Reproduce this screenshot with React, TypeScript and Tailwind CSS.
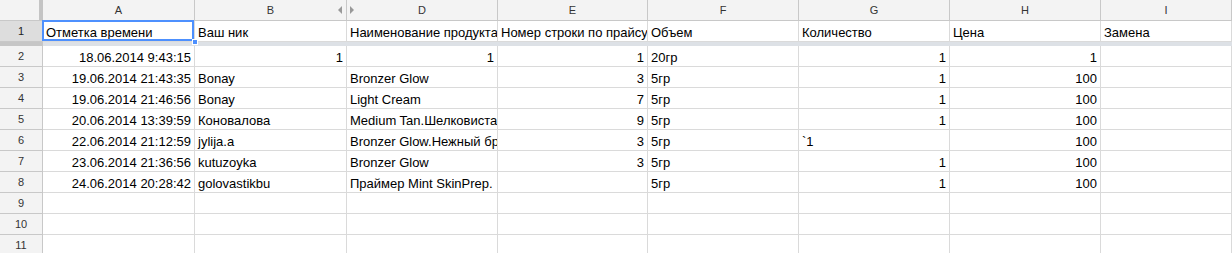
import React from "react";

type Cell = { v: string; r?: boolean };

const cols = ["A", "B", "D", "E", "F", "G", "H", "I"];

const head: string[] = [
  "Отметка времени",
  "Ваш ник",
  "Наименование продукта",
  "Номер строки по прайсу",
  "Объем",
  "Количество",
  "Цена",
  "Замена",
];

const rows: Cell[][] = [
  [{ v: "18.06.2014 9:43:15", r: true }, { v: "1", r: true }, { v: "1", r: true }, { v: "1", r: true }, { v: "20гр" }, { v: "1", r: true }, { v: "1", r: true }, { v: "" }],
  [{ v: "19.06.2014 21:43:35", r: true }, { v: "Bonay" }, { v: "Bronzer Glow" }, { v: "3", r: true }, { v: "5гр" }, { v: "1", r: true }, { v: "100", r: true }, { v: "" }],
  [{ v: "19.06.2014 21:46:56", r: true }, { v: "Bonay" }, { v: "Light Cream" }, { v: "7", r: true }, { v: "5гр" }, { v: "1", r: true }, { v: "100", r: true }, { v: "" }],
  [{ v: "20.06.2014 13:39:59", r: true }, { v: "Коновалова" }, { v: "Medium Tan.Шелковистая пудра" }, { v: "9", r: true }, { v: "5гр" }, { v: "1", r: true }, { v: "100", r: true }, { v: "" }],
  [{ v: "22.06.2014 21:12:59", r: true }, { v: "jylija.a" }, { v: "Bronzer Glow.Нежный бронзер" }, { v: "3", r: true }, { v: "5гр" }, { v: "`1" }, { v: "100", r: true }, { v: "" }],
  [{ v: "23.06.2014 21:36:56", r: true }, { v: "kutuzoyka" }, { v: "Bronzer Glow" }, { v: "3", r: true }, { v: "5гр" }, { v: "1", r: true }, { v: "100", r: true }, { v: "" }],
  [{ v: "24.06.2014 20:28:42", r: true }, { v: "golovastikbu" }, { v: "Праймер Mint SkinPrep." }, { v: "" }, { v: "5гр" }, { v: "1", r: true }, { v: "100", r: true }, { v: "" }],
  [], [], [],
];

const grid = "grid grid-cols-[43px_152px_152px_151px_150px_151px_151px_151px_1fr]";
const cellCls = "h-[21px] border-r border-b border-[#dadada] px-[3px] pt-[2px] text-[13px] leading-[19px] text-black overflow-hidden whitespace-nowrap";
const rowHead = "h-[21px] border-r border-b border-[#c8c8c8] bg-[#f3f3f3] pt-[1px] text-[11px] leading-[19px] text-[#333] text-center";

export default function App() {
  return (
    <div className="w-[1232px] h-[253px] overflow-hidden bg-white font-['Liberation_Sans',Arial,sans-serif]">
      {/* column headers */}
      <div className={grid}>
        <div className="h-[21px] flex border-b border-[#c8c8c8] bg-[#f3f3f3]">
          <div className="w-[39px]" />
          <div className="w-[4px] bg-[#c4c4c4]" />
        </div>
        {cols.map((c) => (
          <div key={c} className="relative h-[21px] border-r border-b border-[#c8c8c8] bg-[#f3f3f3] pt-[1px] text-[11px] leading-[19px] text-[#333] text-center">
            {c}
            {c === "B" && <span className="absolute right-[4px] top-[6px] w-0 h-0 border-y-[4px] border-y-transparent border-r-[4px] border-r-[#999]" />}
            {c === "D" && <span className="absolute left-[3px] top-[6px] w-0 h-0 border-y-[4px] border-y-transparent border-l-[4px] border-l-[#999]" />}
          </div>
        ))}
      </div>

      {/* frozen row 1 */}
      <div className={grid}>
        <div className="h-[21px] border-r border-b border-[#c8c8c8] bg-[#dddddd] pt-[1px] text-[11px] leading-[19px] text-[#222] text-center">1</div>
        {head.map((h, i) => (
          <div key={i} className={`${cellCls} ${i === 0 ? "relative overflow-visible" : ""}`}>
            {h}
            {i === 0 && (
              <>
                <span className="absolute left-0 top-0 w-[152px] h-[21px] -translate-x-px -translate-y-px border-2 border-[#4d90fe] pointer-events-none" />
                <span className="absolute right-[-4px] bottom-[-4px] w-[6px] h-[6px] bg-[#4d90fe] border border-white z-10" />
              </>
            )}
          </div>
        ))}
      </div>

      {/* freeze bar */}
      <div className="flex h-[4px]">
        <div className="w-[43px] bg-[#c6c6c6]" />
        <div className="flex-1 bg-[#dde1e6]" />
      </div>

      {rows.map((row, ri) => (
        <div key={ri} className={grid}>
          <div className={rowHead}>{ri + 2}</div>
          {cols.map((_, ci) => {
            const c = row[ci];
            return (
              <div key={ci} className={`${cellCls} ${c?.r ? "text-right" : ""}`}>
                {c?.v ?? ""}
              </div>
            );
          })}
        </div>
      ))}
    </div>
  );
}
